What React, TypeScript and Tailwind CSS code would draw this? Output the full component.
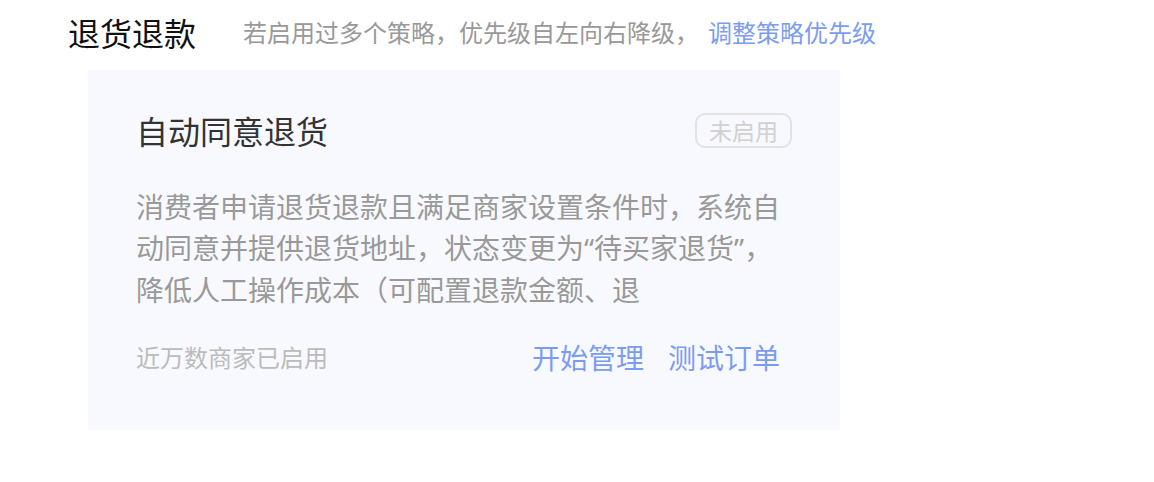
const cjk = { fontFamily: '"Noto Sans CJK SC", "Noto Sans", sans-serif' };

type Strategy = {
  name: string;
  enabled: boolean;
  desc: React.ReactNode;
  usage: string;
};

// latin quotes keep their narrow width instead of the CJK full-width ones
const Q = ({ children }: { children: string }) => (
  <span style={{ fontFamily: '"Noto Sans", sans-serif' }}>{children}</span>
);

const strategies: Strategy[] = [
  {
    name: "自动同意退货",
    enabled: false,
    desc: (
      <>
        消费者申请退货退款且满足商家设置条件时，系统自动同意并提供退货地址，状态变更为
        <Q>“</Q>待买家退货<Q>”</Q>，降低人工操作成本（可配置退款金额、退
      </>
    ),
    usage: "近万数商家已启用",
  },
];

function StrategyCard({ item }: { item: Strategy }) {
  return (
    <div className="w-[752px] bg-[#f8f9fe] px-12 pt-10 pb-[53px]">
      <div className="flex items-center justify-between">
        <h3 className="text-[32px] leading-[40px] text-[#333]">{item.name}</h3>
        <span className="rounded-[10px] border-2 border-[#e2e2e2] px-[12px] text-[23px] leading-[31px] text-[#d0d0d0]">
          {item.enabled ? "已启用" : "未启用"}
        </span>
      </div>
      <p className="mt-9 h-[123px] overflow-hidden pr-3 text-[28px] leading-[41px] text-[#999]">
        {item.desc}
      </p>
      <div className="mt-7 flex items-center justify-between pr-3">
        <span className="text-[24px] leading-[40px] text-[#bbb]">{item.usage}</span>
        <div className="flex gap-6 text-[28px] leading-[40px] text-[#7b9cf3]">
          <a className="cursor-pointer">开始管理</a>
          <a className="cursor-pointer">测试订单</a>
        </div>
      </div>
    </div>
  );
}

export default function App() {
  return (
    <div className="min-h-screen bg-white pl-[68px] pt-[10px]" style={cjk}>
      <div className="flex items-center">
        <h2 className="text-[32px] leading-[44px] text-[#111]">退货退款</h2>
        <p className="ml-[47px] text-[24px] leading-[44px] text-[#999]">
          若启用过多个策略，优先级自左向右降级，
          <a className="ml-[9px] cursor-pointer text-[#7b9cf3]">调整策略优先级</a>
        </p>
      </div>
      <div className="mt-4 ml-5">
        {strategies.map((s) => (
          <StrategyCard key={s.name} item={s} />
        ))}
      </div>
    </div>
  );
}
